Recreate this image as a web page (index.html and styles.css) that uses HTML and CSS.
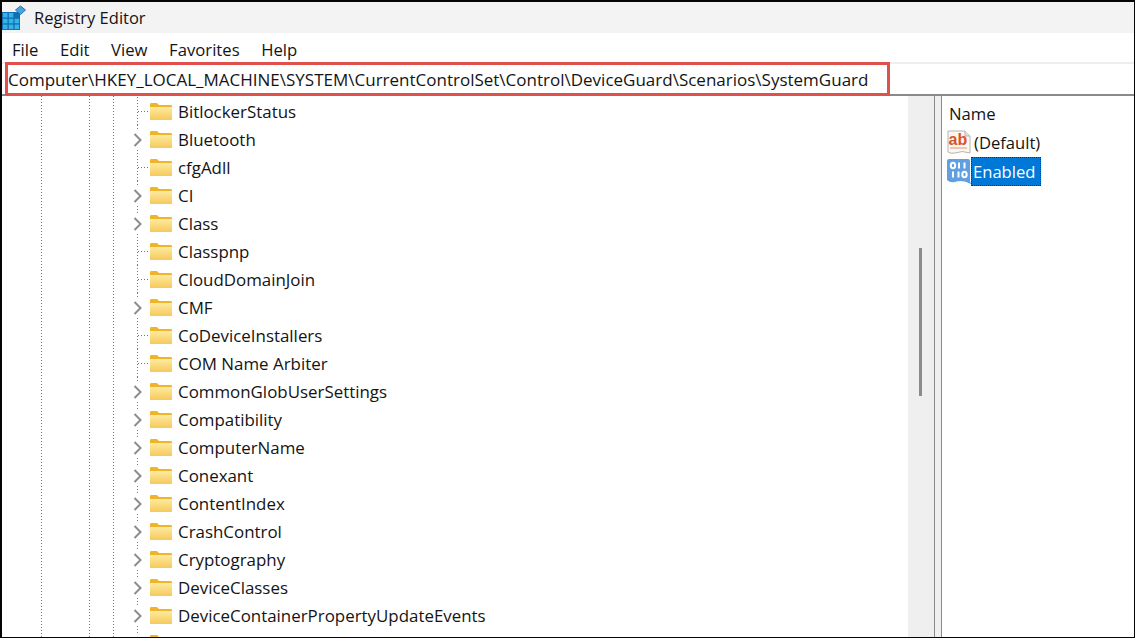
FILE: index.html
```html
<!DOCTYPE html>
<html lang="en">
<head>
<meta charset="utf-8">
<title>Registry Editor</title>
<link rel="stylesheet" href="styles.css">
</head>
<body>
<svg class="defs" width="0" height="0" aria-hidden="true">
  <defs>
    <linearGradient id="fg" x1="0" y1="0" x2="0" y2="1"><stop offset="0" stop-color="#fdeaa0"/><stop offset="1" stop-color="#f6c95c"/></linearGradient>
    <symbol id="folder" viewBox="0 0 22 17">
      <path d="M0 1.2Q0 0 1.2 0H7L9 2H20.8Q22 2 22 3.2V15.8Q22 17 20.8 17H1.2Q0 17 0 15.8Z" fill="#f0b429"/>
      <path d="M0 4H22V15.8Q22 17 20.8 17H1.2Q0 17 0 15.8Z" fill="url(#fg)"/>
    </symbol>
    <symbol id="chev" viewBox="0 0 24 28">
      <path d="M12.5 0V5M12.5 25V28" stroke="#777" stroke-dasharray="1 2" fill="none"/>
      <path d="M9.5 9L15.5 15L9.5 21" fill="none" stroke="#8c8c8c" stroke-width="2"/>
    </symbol>
    <symbol id="leaf" viewBox="0 0 24 28">
      <path d="M12.5 0V28M13 14.5H23" stroke="#777" stroke-dasharray="1 2" fill="none"/>
    </symbol>
  </defs>
</svg>
<div class="app">
  <header class="titlebar">
    <svg class="appicon" width="24" height="26" viewBox="0 0 24 26">
      <rect x="0" y="7" width="18" height="18" fill="#0f6fb0"/>
      <g fill="#35b3e8">
        <rect x="1" y="8" width="4.5" height="4.5"/><rect x="6.8" y="8" width="4.5" height="4.5"/>
        <rect x="1" y="13.8" width="4.5" height="4.5"/><rect x="6.8" y="13.8" width="4.5" height="4.5"/><rect x="12.6" y="13.8" width="4.5" height="4.5"/>
        <rect x="1" y="19.6" width="4.5" height="4.5"/><rect x="6.8" y="19.6" width="4.5" height="4.5"/><rect x="12.6" y="19.6" width="4.5" height="4.5"/>
      </g>
      <path d="M18.5 1L23.5 5L18.5 9.5L13.5 5Z" fill="#4aa3d8" stroke="#1f77b4"/>
    </svg>
    <span class="apptitle">Registry Editor</span>
  </header>
  <nav class="menubar">
    <span>File</span><span>Edit</span><span>View</span><span>Favorites</span><span>Help</span>
  </nav>
  <div class="addressbar">
    <div class="address">Computer\HKEY_LOCAL_MACHINE\SYSTEM\CurrentControlSet\Control\DeviceGuard\Scenarios\SystemGuard</div>
  </div>
  <main class="panes">
    <section class="tree">
      <div class="row"><svg class="branch"><use href="#leaf"/></svg><svg class="folder"><use href="#folder"/></svg><span>BitlockerStatus</span></div>
      <div class="row"><svg class="branch"><use href="#chev"/></svg><svg class="folder"><use href="#folder"/></svg><span>Bluetooth</span></div>
      <div class="row"><svg class="branch"><use href="#leaf"/></svg><svg class="folder"><use href="#folder"/></svg><span>cfgAdll</span></div>
      <div class="row"><svg class="branch"><use href="#chev"/></svg><svg class="folder"><use href="#folder"/></svg><span>CI</span></div>
      <div class="row"><svg class="branch"><use href="#chev"/></svg><svg class="folder"><use href="#folder"/></svg><span>Class</span></div>
      <div class="row"><svg class="branch"><use href="#leaf"/></svg><svg class="folder"><use href="#folder"/></svg><span>Classpnp</span></div>
      <div class="row"><svg class="branch"><use href="#leaf"/></svg><svg class="folder"><use href="#folder"/></svg><span>CloudDomainJoin</span></div>
      <div class="row"><svg class="branch"><use href="#chev"/></svg><svg class="folder"><use href="#folder"/></svg><span>CMF</span></div>
      <div class="row"><svg class="branch"><use href="#leaf"/></svg><svg class="folder"><use href="#folder"/></svg><span>CoDeviceInstallers</span></div>
      <div class="row"><svg class="branch"><use href="#leaf"/></svg><svg class="folder"><use href="#folder"/></svg><span>COM Name Arbiter</span></div>
      <div class="row"><svg class="branch"><use href="#chev"/></svg><svg class="folder"><use href="#folder"/></svg><span>CommonGlobUserSettings</span></div>
      <div class="row"><svg class="branch"><use href="#chev"/></svg><svg class="folder"><use href="#folder"/></svg><span>Compatibility</span></div>
      <div class="row"><svg class="branch"><use href="#chev"/></svg><svg class="folder"><use href="#folder"/></svg><span>ComputerName</span></div>
      <div class="row"><svg class="branch"><use href="#chev"/></svg><svg class="folder"><use href="#folder"/></svg><span>Conexant</span></div>
      <div class="row"><svg class="branch"><use href="#chev"/></svg><svg class="folder"><use href="#folder"/></svg><span>ContentIndex</span></div>
      <div class="row"><svg class="branch"><use href="#chev"/></svg><svg class="folder"><use href="#folder"/></svg><span>CrashControl</span></div>
      <div class="row"><svg class="branch"><use href="#chev"/></svg><svg class="folder"><use href="#folder"/></svg><span>Cryptography</span></div>
      <div class="row"><svg class="branch"><use href="#chev"/></svg><svg class="folder"><use href="#folder"/></svg><span>DeviceClasses</span></div>
      <div class="row"><svg class="branch"><use href="#chev"/></svg><svg class="folder"><use href="#folder"/></svg><span>DeviceContainerPropertyUpdateEvents</span></div>
      <div class="row"><svg class="branch"><use href="#chev"/></svg><svg class="folder"><use href="#folder"/></svg></div>
    </section>
    <div class="scrollbar"><div class="thumb"></div></div>
    <div class="splitter"></div>
    <section class="values">
      <div class="colhead">Name</div>
      <div class="value">
        <svg class="vicon" width="24" height="25" viewBox="0 0 24 25">
          <path d="M1 1H18L23 6V23Q15 20 8 23Q4 24 1 22Z" fill="#fbf7f3" stroke="#b9b3ad"/>
          <path d="M18 1V6H23" fill="#e6e2de" stroke="#b9b3ad"/>
          <text x="1.5" y="15" class="abtext">ab</text>
          <path d="M3 18H20" stroke="#e6b6a2" stroke-width="1.5"/>
        </svg>
        <span class="vname">(Default)</span>
      </div>
      <div class="value">
        <svg class="vicon" width="24" height="25" viewBox="0 0 24 25">
          <path d="M0 2Q0 0 2 0H21Q23 0 23 2V22L24 25Q15 20 8 23Q3 24 0 21Z" fill="#5f9fe2"/>
          <g fill="none" stroke="#fff" stroke-width="2">
            <ellipse cx="6" cy="6.5" rx="2.2" ry="2.8"/><path d="M12 3.5V9.5M17.5 3.5V9.5"/>
            <path d="M6 12.5V18.5M11.5 12.5V18.5"/><ellipse cx="17.5" cy="15.5" rx="2.2" ry="2.8"/>
          </g>
        </svg>
        <span class="vname selected">Enabled</span>
      </div>
    </section>
  </main>
</div>
</body>
</html>
```
FILE: styles.css
```css
* { box-sizing: border-box; }
html, body { margin: 0; height: 100%; }
body {
  font-family: "Open Sans", "Noto Sans", sans-serif;
  font-size: 16.9px;
  color: #141414;
  background: #000;
  overflow: hidden;
}
.defs { display: block; height: 0; }
.app {
  width: 1135px;
  height: 638px;
  border: solid #050505;
  border-width: 2px 1px 1px 2px;
  background: #fff;
  display: flex;
  flex-direction: column;
  overflow: hidden;
}
.titlebar {
  height: 31px;
  flex: none;
  background: #f3f3f3;
  display: flex;
  align-items: center;
  gap: 8px;
}
.appicon { flex: none; }
.apptitle { font-size: 16.5px; }
.menubar {
  height: 29px;
  flex: none;
  display: flex;
  align-items: center;
  gap: 21.5px;
  padding: 4px 0 0 10px;
  font-size: 16.7px;
}
.addressbar {
  height: 34px;
  flex: none;
  padding-left: 3px;
  background:
    linear-gradient(#eeeeee, #eeeeee) top / 100% 2px no-repeat,
    linear-gradient(#8a8a8a, #8a8a8a) bottom / 100% 2px no-repeat,
    #fff;
}
.address {
  width: 885px;
  height: 34px;
  border: 3px solid #e0504c;
  background: #fff;
  padding-left: 0;
  line-height: 30px;
  white-space: nowrap;
  font-size: 17px;
}
.panes {
  flex: 1;
  min-height: 0;
  display: flex;
}
.tree {
  width: 906px;
  flex: none;
  padding-top: 1px;
  overflow: hidden;
  padding-left: 123px;
  background:
    repeating-linear-gradient(#777 0 1px, transparent 1px 3px) 39px 0 / 1px 100% no-repeat,
    repeating-linear-gradient(#777 0 1px, transparent 1px 3px) 87px 0 / 1px 100% no-repeat,
    repeating-linear-gradient(#777 0 1px, transparent 1px 3px) 111px 0 / 1px 100% no-repeat,
    #fff;
}
.row {
  height: 28px;
  display: flex;
  align-items: center;
  white-space: nowrap;
}
.branch { width: 24px; height: 28px; flex: none; margin-right: 1px; }
.folder { width: 22px; height: 17px; flex: none; margin-right: 6px; }
.scrollbar {
  width: 26px;
  flex: none;
  background: #efefef;
  padding: 152px 0 0 11px;
}
.thumb { width: 3px; height: 148px; background: #8b8b8b; }
.splitter {
  width: 8px;
  flex: none;
  background: #f0f0f0;
  border-left: 1px solid #8a8a8a;
  border-right: 1px solid #8a8a8a;
}
.values {
  flex: 1;
  padding: 3px 0 0 5px;
  background: #fff;
}
.colhead { height: 29px; line-height: 29px; padding-left: 2px; font-size: 16.7px; }
.value {
  height: 29px;
  display: flex;
  align-items: center;
}
.vicon { flex: none; }
.vname { height: 29px; line-height: 30px; padding: 0 2px 0 3px; font-size: 16.6px; }
.selected {
  background: #0078d7;
  color: #fff;
  padding: 0 6px 0 2px;
  outline: 1px dotted #0a3a66;
  outline-offset: -1px;
}
.abtext { font: 700 16px "Liberation Sans", sans-serif; fill: #d9542b; }
```
